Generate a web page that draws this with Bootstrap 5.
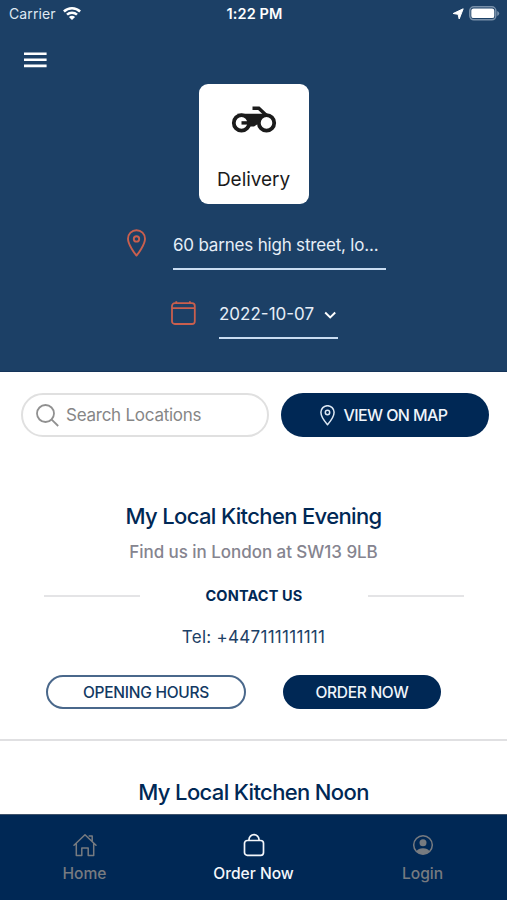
<!DOCTYPE html>
<html lang="en">
<head>
<meta charset="utf-8">
<meta name="viewport" content="width=device-width, initial-scale=1">
<title>Order Now</title>
<link href="https://cdn.jsdelivr.net/npm/bootstrap@5.3.0/dist/css/bootstrap.min.css" rel="stylesheet">
<style>
  :root { --navy: #002855; --hero: #1c4066; }
  body { font-family: Inter, "Liberation Sans", sans-serif; }
  svg { display: block; flex: none; }
  .screen { height: 900px; }
  .hero { background: var(--hero); height: 372px; border-bottom: 1px solid #15345a; }
  .status { height: 28px; padding: 0 7px 0 9px; font-size: 14px; line-height: 28px; }
  .status > div { flex: 1 1 0; }
  .carrier { color: #dfe8f2; letter-spacing: .1px; }
  .carrier svg { margin: -2px 0 0 7px; }
  .clock { font-size: 14.5px; letter-spacing: .1px; }
  .battery { margin: -1px 0 0 5px; }
  .menu { height: 56px; padding: 24px 0 0 24px; }
  .mode { width: 110px; height: 120px; border-radius: 9px; color: #1b1b1b; padding-top: 21px; }
  .mode span { font-size: 19px; line-height: 24px; margin-top: 35px; letter-spacing: -.05px; }
  .field { color: #e6eef7; font-size: 17px; border-bottom: 2px solid #c9dcf1; }
  .place { margin: 18px 0 0 127px; height: 48px; }
  .place svg { margin-top: 7px; }
  .place .field { margin-left: 27px; width: 213px; height: 48px; line-height: 47px; letter-spacing: -.19px; }
  .date { margin: 21px 0 0 171px; height: 48px; }
  .date > svg { margin-top: 10px; }
  .date .field { margin-left: 23px; width: 119px; height: 48px; padding-top: 2px; }
  .date .field svg { margin-left: 10px; }
  .tools { padding: 21px 18px 0 21px; }
  .search { width: 248px; height: 44px; border: 2px solid #e0e0e0; border-radius: 22px; color: #868686; font-size: 17px; padding-left: 13px; letter-spacing: -.25px; }
  .search span { margin: 1px 0 0 7px; }
  .map-btn { width: 208px; height: 44px; border-radius: 22px; margin-left: 12px; font-size: 16px; letter-spacing: -.6px; font-weight: 500; }
  .map-btn svg { margin-right: 9px; }
  .map-btn span { margin-right: 3px; }
  .solid, .solid:hover { background: var(--navy); color: #f0f5fb; }
  .kitchen { color: var(--navy); font-size: 22px; line-height: 28px; font-weight: 500; letter-spacing: -.64px; }
  .where { color: #85848f; font-size: 17px; line-height: 24px; font-weight: 500; margin-top: 10px; letter-spacing: -.05px; }
  .contact { padding: 0 43px 0 44px; margin-top: 20px; height: 24px; color: var(--navy); font-size: 14.5px; font-weight: 700; letter-spacing: .15px; }
  .rule { width: 96px; height: 2px; background: #e4e4e6; }
  .tel { color: #1c4066; font-size: 17px; line-height: 24px; margin-top: 17px; letter-spacing: .28px; }
  .actions { padding-left: 46px; margin-top: 26px; }
  .pill { height: 34px; border-radius: 17px; font-size: 15.5px; font-weight: 500; letter-spacing: -.27px; padding: 0; line-height: 31px; }
  .outline { width: 200px; border: 2px solid #4a688b; color: #123963; background: #fff; line-height: 29px; }
  .order { width: 158px; margin-left: 37px; }
  .split { height: 2px; background: #e0e0e2; margin-top: 30px; }
  .first { padding-top: 65px; }
  .second { padding-top: 37px; }
  .tabs { height: 86px; background: var(--navy); border-top: 1px solid #40536b; }
  .tab { flex: 1 1 0; color: #777b80; font-size: 15.6px; line-height: 20px; font-weight: 500; padding-top: 18px; }
  .tab svg { margin-bottom: 7px; }
  .tab.on { color: #f4f7fb; }
</style>
<script src="https://cdn.jsdelivr.net/npm/bootstrap@5.3.0/dist/js/bootstrap.bundle.min.js"></script>
</head>
<body>
<div class="screen d-flex flex-column overflow-hidden bg-white">
  <header class="hero flex-shrink-0">
    <div class="status d-flex align-items-center text-white">
      <div class="d-flex align-items-center carrier"><span>Carrier</span>
        <svg width="18" height="15" viewBox="0 0 18 15" fill="none" stroke="#fff" stroke-width="2.500"><path d="M.9 5.500a11.600 11.600 0 0 1 16.200 0M4 8.700a7.200 7.200 0 0 1 10 0"/><path d="M9 14 5.900 11.100a4.500 4.500 0 0 1 6.200 0z" fill="#fff" stroke="none"/></svg>
      </div>
      <span class="clock fw-semibold">1:22 PM</span>
      <div class="d-flex align-items-center justify-content-end">
        <svg width="12" height="12" viewBox="0 0 12 12"><path d="M11.200 .8 7.200 11 6.100 6.300 1.200 5.500z" fill="#fff" stroke="#fff" stroke-linejoin="round"/></svg>
        <svg class="battery" width="31" height="15" viewBox="0 0 31 15"><rect x=".8" y=".8" width="26" height="13" rx="4" fill="none" stroke="#7890aa" stroke-width="1.500"/><rect x="2.300" y="2.500" width="23" height="9.600" rx="2.200" fill="#fff"/><path d="M28.200 5v5q2-.8 2-2.500t-2-2.500" fill="#7890aa"/></svg>
      </div>
    </div>
    <div class="menu"><svg width="23" height="18" viewBox="0 0 23 18"><path d="M0 1.700h22.600M0 7.800h22.600M0 13.900h22.600" stroke="#fff" stroke-width="2.600"/></svg></div>
    <div class="mode bg-white mx-auto d-flex flex-column align-items-center">
      <svg width="46" height="28" viewBox="0 0 46 28" fill="none" stroke="#1b1b1b"><circle cx="10.500" cy="17.900" r="7.700" stroke-width="3.800"/><circle cx="35.500" cy="17.900" r="7.700" stroke-width="3.800"/><path d="M21.500 3.200h6.300l8 7.500" stroke-width="3.400"/><path d="M6 8.700H32l3 2.300q-6.500 2-8.500 8.300l-3.500 2.200H18.500q.5-6-4.500-9.500z" fill="#1b1b1b" stroke="none"/><path d="M10.500 17.900h12" stroke-width="3.400"/></svg>
      <span>Delivery</span>
    </div>
    <div class="place d-flex">
      <svg width="19" height="29" viewBox="0 0 19 29" fill="none" stroke="#c95f4e" stroke-width="1.900"><path d="M9.500 26.500C8 25 1 15.500 1 9.700a8.500 8.500 0 0 1 17 0C18 15.500 11 25 9.500 26.500z" stroke-linejoin="round"/><circle cx="9.500" cy="9.900" r="2.700"/></svg>
      <div class="field">60 barnes high street, lo...</div>
    </div>
    <div class="date d-flex">
      <svg width="25" height="25" viewBox="0 0 25 25" fill="none" stroke="#c95f4e" stroke-width="1.800"><rect x="1" y="2.200" width="22.800" height="20.800" rx="2.800"/><path d="M1 7.200h22.800M5.300 .3v2M18.900 .3v2"/></svg>
      <div class="field d-flex align-items-center"><span>2022-10-07</span>
        <svg width="13" height="9" viewBox="0 0 13 9" fill="none" stroke="#fff" stroke-width="1.900"><path d="m1.200 1.500 5 5 5-5"/></svg>
      </div>
    </div>
  </header>

  <main class="flex-grow-1 overflow-hidden">
    <div class="tools d-flex">
      <div class="search d-flex align-items-center">
        <svg width="23" height="23" viewBox="0 0 23 23" fill="none" stroke="#909090" stroke-width="1.800"><circle cx="9.500" cy="9.500" r="8.500"/><path d="m15.700 15.700 6.500 6.300"/></svg>
        <span>Search Locations</span>
      </div>
      <button class="btn map-btn solid border-0 p-0 d-flex align-items-center justify-content-center" type="button">
        <svg width="15" height="21" viewBox="0 0 15 21" fill="none" stroke="#dce7f3" stroke-width="1.500"><path d="M7.500 19.700C6 18 .9 11.500.9 7.300a6.600 6.600 0 0 1 13.200 0C14.100 11.500 9 18 7.500 19.700z" stroke-linejoin="round"/><circle cx="7.500" cy="7.500" r="2.200"/></svg>
        <span>VIEW ON MAP</span>
      </button>
    </div>
    <section class="first text-center">
      <h2 class="kitchen mb-0">My Local Kitchen Evening</h2>
      <p class="where mb-0">Find us in London at SW13 9LB</p>
      <div class="contact d-flex align-items-center justify-content-between"><div class="rule"></div><span>CONTACT US</span><div class="rule"></div></div>
      <p class="tel mb-0">Tel: +447111111111</p>
      <div class="actions d-flex">
        <button class="btn pill outline" type="button">OPENING HOURS</button>
        <button class="btn pill order solid border-0" type="button">ORDER NOW</button>
      </div>
      <div class="split"></div>
    </section>
    <section class="second text-center"><h2 class="kitchen mb-0">My Local Kitchen Noon</h2></section>
  </main>

  <nav class="tabs d-flex flex-shrink-0">
    <div class="tab d-flex flex-column align-items-center">
      <svg width="24" height="24" viewBox="0 0 24 24" fill="none" stroke="currentColor" stroke-width="1.500" stroke-linejoin="round" stroke-linecap="round"><path d="M1 12.300 12 1.700l11 10.600M3.300 10.500v12h5.500v-7.500h6.400v7.500h5.500v-12M16.200 3h3v5.300"/></svg>
      <span>Home</span>
    </div>
    <div class="tab on d-flex flex-column align-items-center">
      <svg width="24" height="24" viewBox="0 0 24 24" fill="none" stroke="currentColor" stroke-width="1.700"><rect x="2.500" y="7.500" width="19" height="14.800" rx="2.800"/><path d="M7 7.500V6.600a5 5 0 0 1 10 0v.9"/></svg>
      <span>Order Now</span>
    </div>
    <div class="tab d-flex flex-column align-items-center">
      <svg width="24" height="24" viewBox="0 0 24 24" fill="none" stroke="currentColor"><circle cx="12" cy="12" r="9.300" stroke-width="1.500"/><circle cx="12" cy="9.800" r="3.500" fill="currentColor" stroke="none"/><path d="M5.300 18.500q2-3.300 6.700-3.300t6.700 3.300Q16 21.300 12 21.300t-6.700-2.800z" fill="currentColor" stroke="none"/></svg>
      <span>Login</span>
    </div>
  </nav>
</div>
</body>
</html>
